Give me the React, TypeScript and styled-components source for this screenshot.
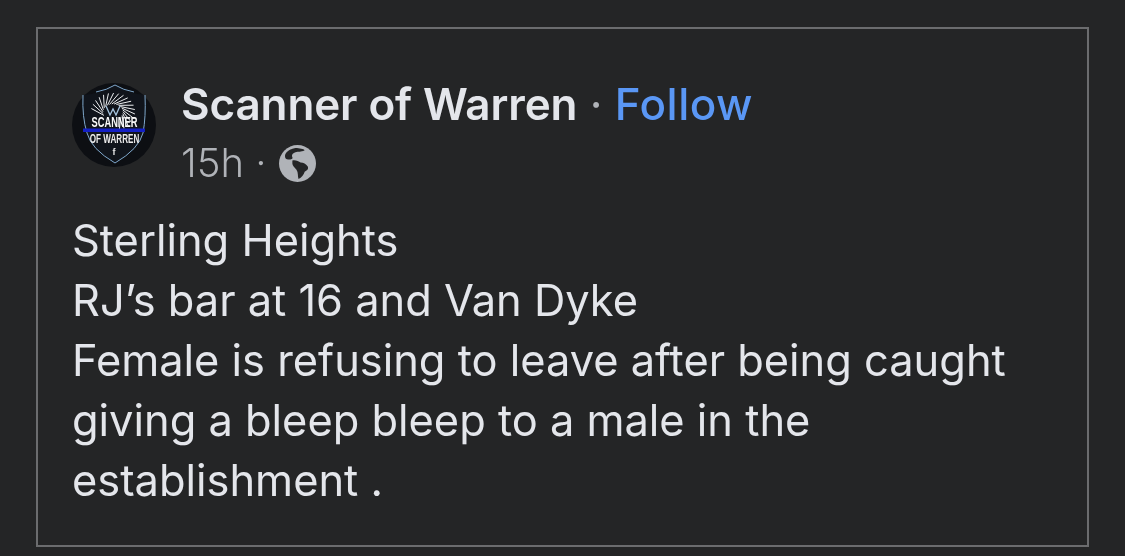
import React from "react";
import styled, { createGlobalStyle } from "styled-components";

const Global = createGlobalStyle`
  html, body { margin: 0; padding: 0; background: #242526; }
  body { width: 1125px; height: 556px; overflow: hidden; font-family: Inter, "Liberation Sans", sans-serif; }
`;

const Page = styled.div`
  width: 1125px;
  height: 556px;
  box-sizing: border-box;
  padding: 27px 36px 9px 36px;
  background: #242526;
`;

const Card = styled.article`
  box-sizing: border-box;
  width: 1053px;
  height: 520px;
  border: 2px solid #6b6c6e;
  padding: 50px 34px 0 34px;
  will-change: transform;
`;

const Header = styled.header`
  display: flex;
  align-items: flex-start;
  gap: 25px;
  height: 131px;
`;

const AvatarFrame = styled.div`
  flex: none;
  width: 84px;
  height: 84px;
  margin-top: 4px;
`;

const Meta = styled.div`
  display: flex;
  flex-direction: column;
`;

const TitleRow = styled.div`
  display: flex;
  align-items: baseline;
  font-size: 44px;
  line-height: 50px;
  font-weight: 600;
  color: #e4e6eb;
  white-space: pre;
`;

const Name = styled.span`
  letter-spacing: -0.12px;
`;

const Separator = styled.span`
  font-weight: 400;
  color: #b0b3b8;
`;

const Follow = styled.span`
  color: #5a97f5;
  font-weight: 500;
  letter-spacing: 0.45px;
`;

const SubRow = styled.div`
  display: flex;
  align-items: center;
  font-size: 40px;
  line-height: 44px;
  font-weight: 350;
  color: #b0b3b8;
  margin-top: 12px;
  white-space: pre;
`;

const GlobeIcon = styled.svg`
  width: 37px;
  height: 37px;
  margin-left: 1px;
`;

const Body = styled.div`
  font-size: 43.4px;
  line-height: 60px;
  font-weight: 400;
  color: #e4e6eb;
`;

const Line = styled.div`
  white-space: pre;
`;

const rays = Array.from({ length: 19 }, (_, i) => {
  const a = ((-205 + i * 13.5) * Math.PI) / 180;
  const b = a + 0.62;
  return {
    x1: 41 + 10 * Math.cos(a),
    y1: 29 + 8 * Math.sin(a),
    x2: 41 + 22 * Math.cos(b),
    y2: 29 + 19 * Math.sin(b),
  };
});

const Avatar = () => (
  <svg width="84" height="84" viewBox="0 0 84 84">
    <circle cx="42" cy="42" r="42" fill="#0d0f13" />
    <path d="M11 12 Q28 11 43 2 Q58 11 73 12 Q74 34 71 50 Q67 66 43 80 Q19 66 15 50 Q10 34 11 12 Z" fill="#10141b" />
    <path d="M11 12 Q10 34 15 50 Q19 66 43 80 M73 12 Q74 34 71 50 Q67 66 43 80 M24 9 Q35 7 43 2 Q51 7 62 9" fill="none" stroke="#7fa8cc" strokeWidth="1" />
    <g stroke="#eceef0" strokeWidth="1">
      {rays.map((r, i) => (
        <line key={i} x1={r.x1} y1={r.y1} x2={r.x2} y2={r.y2} />
      ))}
    </g>
    <path d="M34 23 L38 32 L41 26 L44 32 L48 23" fill="none" stroke="#a8c6e0" strokeWidth="1.3" />
    <g fontFamily="'Liberation Sans', sans-serif" fontWeight="700" textAnchor="middle">
      <text transform="translate(42.5 44) scale(0.62 1)" fontSize="15" fill="#fafafa">SCANNER</text>
      <text transform="translate(42.5 60) scale(0.6 1)" fontSize="13.5" fill="#ececec">OF WARREN</text>
      <text x="42" y="72" fontSize="9" fill="#e8e8e8">f</text>
    </g>
    <rect x="11" y="45.5" width="62" height="3.5" fill="#1420c4" />
  </svg>
);

const Globe = () => (
  <GlobeIcon viewBox="0 0 36 36">
    <circle cx="18" cy="18" r="18" fill="#b0b3b8" />
    <path fill="#242526" d="M6 12 C5 8 9 4 16 3 C20 3 24 4 25 5 C21 7 19 6 16 7 C13 8 12 10 13 12 C14 14 11 14 9 14 C7 14 6 13 6 12 Z" />
    <path fill="#242526" d="M13 15 C16 14 19 16 21 17 C24 17 26 18 28 21 C29 24 27 25 25 26 C24 29 22 32 19 33 C18 30 19 27 17 24 C15 22 13 20 13 18 Z" />
  </GlobeIcon>
);

const App = () => (
  <>
    <Global />
    <Page>
      <Card>
        <Header>
          <AvatarFrame><Avatar /></AvatarFrame>
          <Meta>
            <TitleRow>
              <Name>Scanner of Warren</Name>
              <Separator> · </Separator>
              <Follow>Follow</Follow>
            </TitleRow>
            <SubRow>
              <span>15h · </span>
              <Globe />
            </SubRow>
          </Meta>
        </Header>
        <Body>
          <Line>Sterling Heights</Line>
          <Line>RJ’s bar at 16 and Van Dyke</Line>
          <Line>Female is refusing to leave after being caught</Line>
          <Line>giving a bleep bleep to a male in the</Line>
          <Line>establishment .</Line>
        </Body>
      </Card>
    </Page>
  </>
);

export default App;
